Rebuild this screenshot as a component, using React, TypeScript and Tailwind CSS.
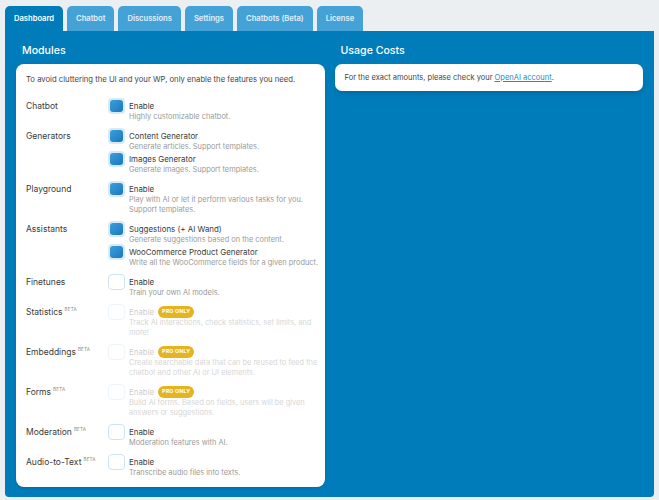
import React from 'react';

type Option = {
  title: string;
  desc: string[];
  checked?: boolean;
  disabled?: boolean;
  pro?: boolean;
};

type Group = {
  label: string;
  beta?: boolean;
  options: Option[];
};

const tabs = ['Dashboard', 'Chatbot', 'Discussions', 'Settings', 'Chatbots (Beta)', 'License'];

const groups: Group[] = [
  { label: 'Chatbot', options: [{ title: 'Enable', desc: ['Highly customizable chatbot.'], checked: true }] },
  {
    label: 'Generators',
    options: [
      { title: 'Content Generator', desc: ['Generate articles. Support templates.'], checked: true },
      { title: 'Images Generator', desc: ['Generate images. Support templates.'], checked: true },
    ],
  },
  {
    label: 'Playground',
    options: [
      { title: 'Enable', desc: ['Play with AI or let it perform various tasks for you.', 'Support templates.'], checked: true },
    ],
  },
  {
    label: 'Assistants',
    options: [
      { title: 'Suggestions (+ AI Wand)', desc: ['Generate suggestions based on the content.'], checked: true },
      { title: 'WooCommerce Product Generator', desc: ['Write all the WooCommerce fields for a given product.'], checked: true },
    ],
  },
  { label: 'Finetunes', options: [{ title: 'Enable', desc: ['Train your own AI models.'] }] },
  {
    label: 'Statistics',
    beta: true,
    options: [
      { title: 'Enable', desc: ['Track AI interactions, check statistics, set limits, and', 'more!'], disabled: true, pro: true },
    ],
  },
  {
    label: 'Embeddings',
    beta: true,
    options: [
      {
        title: 'Enable',
        desc: ['Create searchable data that can be reused to feed the', 'chatbot and other AI or UI elements.'],
        disabled: true,
        pro: true,
      },
    ],
  },
  {
    label: 'Forms',
    beta: true,
    options: [
      {
        title: 'Enable',
        desc: ['Build AI forms. Based on fields, users will be given', 'answers or suggestions.'],
        disabled: true,
        pro: true,
      },
    ],
  },
  { label: 'Moderation', beta: true, options: [{ title: 'Enable', desc: ['Moderation features with AI.'] }] },
  { label: 'Audio-to-Text', beta: true, options: [{ title: 'Enable', desc: ['Transcribe audio files into texts.'] }] },
];

function Checkbox({ checked, disabled }: { checked?: boolean; disabled?: boolean }) {
  if (checked) {
    return (
      <span className="mt-[-2px] flex h-[16px] w-[17px] shrink-0 items-center justify-center rounded-[4px] bg-[#d6eaf7]">
        <span className="h-[12px] w-[13px] rounded-[3px] bg-gradient-to-br from-[#3a9fdd] to-[#1c78bb]" />
      </span>
    );
  }
  return (
    <span
      className={`mt-[-2px] h-[16px] w-[17px] shrink-0 rounded-[4px] border bg-white ${
        disabled ? 'border-[#eef5fa]' : 'border-[#cfe4f3]'
      }`}
    />
  );
}

function OptionRow({ option }: { option: Option }) {
  return (
    <div className="flex gap-[4px]">
      <Checkbox checked={option.checked} disabled={option.disabled} />
      <div className="whitespace-nowrap">
        <div className="flex h-[12px] items-center gap-[4px]">
          <span className={`text-[7.9px] leading-[12px] ${option.disabled ? 'text-[#cfcfcf]' : 'text-[#3a3a3a]'}`}>
            {option.title}
          </span>
          {option.pro && (
            <span className="flex h-[12px] w-[36px] items-center justify-center rounded-full bg-[#e4b423] text-[5.3px] font-bold leading-none tracking-[0.2px] text-white">
              PRO ONLY
            </span>
          )}
        </div>
        {option.desc.map((line) => (
          <div
            key={line}
            className={`text-[7.4px] leading-[10px] ${option.disabled ? 'text-[#d6d6d6]' : 'text-[#9a9a9a]'}`}
          >
            {line}
          </div>
        ))}
      </div>
    </div>
  );
}

export default function App() {
  return (
    <div className="min-h-[500px] bg-[#eceff2] px-[5px] pt-[6px] font-['Inter',sans-serif]">
      {/* tabs */}
      <div className="flex gap-[4px]">
        {tabs.map((tab, i) => (
          <div
            key={tab}
            className={`flex h-[25px] items-center rounded-t-[5px] px-[9px] text-[7.6px] font-semibold ${
              i === 0 ? 'bg-[#007cba] text-white' : 'bg-[#45a2d6] text-[#e3f1fa]'
            }`}
          >
            {tab}
          </div>
        ))}
      </div>

      <div className="grid grid-cols-2 gap-[10px] rounded-b-[4px] bg-[#007cba] px-[11px] pb-[10px] pt-[10px]">
        {/* Modules */}
        <div>
          <h2 className="mb-[3px] px-[6px] text-[10.6px] font-medium leading-[20px] text-white">Modules</h2>
          <div className="rounded-[8px] bg-white px-[10px] pb-[9px] pt-[10px] shadow-sm">
            <p className="mb-[14px] whitespace-nowrap text-[7.7px] leading-[12px] text-[#444]">
              To avoid cluttering the UI and your WP, only enable the features you need.
            </p>
            <div className="flex flex-col gap-[8px]">
              {groups.map((group) => (
                <div key={group.label} className="flex">
                  <div className="flex w-[82px] shrink-0 items-start text-[8.5px] leading-[12px] text-[#3a3a3a]">
                    <span>{group.label}</span>
                    {group.beta && (
                      <span className="ml-[2px] mt-[1px] text-[4.6px] leading-[6px] tracking-[0.2px] text-[#8a8a8a]">
                        BETA
                      </span>
                    )}
                  </div>
                  <div className="flex flex-col gap-[1px]">
                    {group.options.map((option) => (
                      <OptionRow key={option.title} option={option} />
                    ))}
                  </div>
                </div>
              ))}
            </div>
          </div>
        </div>

        {/* Usage Costs */}
        <div>
          <h2 className="mb-[3px] px-[6px] text-[10.6px] font-medium leading-[20px] text-white">Usage Costs</h2>
          <div className="rounded-[7px] bg-white px-[10px] pb-[8px] pt-[8px] shadow-md">
            <p className="whitespace-nowrap text-[7.5px] leading-[11px] text-[#444]">
              For the exact amounts, please check your{' '}
              <a href="#" className="text-[#2b86cc] underline">
                OpenAI account
              </a>
              .
            </p>
          </div>
        </div>
      </div>
    </div>
  );
}
